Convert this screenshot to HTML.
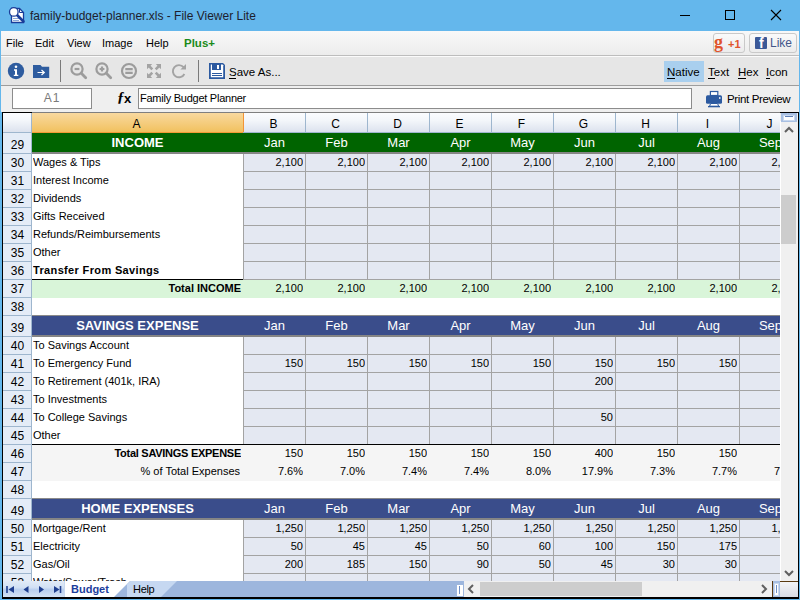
<!DOCTYPE html>
<html><head><meta charset="utf-8">
<style>
*{margin:0;padding:0;box-sizing:border-box}
html,body{width:800px;height:600px;overflow:hidden;background:#64b7ec;font-family:"Liberation Sans",sans-serif}
div{position:absolute}
.t{white-space:nowrap;color:#000;line-height:15px}
#grid div{overflow:hidden;white-space:nowrap}
.lab{font-size:11px;color:#000;line-height:17px;display:block}
.b{font-weight:bold}
.num{font-size:11px;color:#000;line-height:17px;display:block}
.hdr{font-size:13px;font-weight:bold;color:#fff;line-height:19px;display:block}
.mon{font-size:13px;color:#fff;line-height:20px;display:block}
.rh{font-size:12px;color:#000;line-height:17px;display:block;padding-left:1px;padding-top:1px}
.ch{font-size:12px;color:#000;line-height:19px;padding-top:2px;padding-right:2px;display:block;text-align:center}
</style></head><body>
<!-- title bar -->
<div style="left:0;top:0;width:800px;height:31px;background:#64b7ec"></div>
<svg style="position:absolute;left:5px;top:4px" width="24" height="22" viewBox="0 0 24 22">
  <path d="M6.5 4.5H14.5L18.5 8.5V18.5H6.5z" fill="#fff" stroke="#1a3d9a" stroke-width="1.3"/>
  <path d="M14.5 4.5V8.5H18.5" fill="none" stroke="#1a3d9a" stroke-width="1"/>
  <path d="M8 14.5h6M8 16.5h6" stroke="#7f9fd6" stroke-width="0.9"/>
  <path d="M11.5 10.5L18.5 17.5" stroke="#1a3d9a" stroke-width="2.6" stroke-linecap="round"/>
  <circle cx="8.8" cy="7.9" r="4.3" fill="#fff" stroke="#1a3d9a" stroke-width="1.3"/>
</svg>
<div class="t" style="left:30px;top:9px;font-size:12px;color:#1e1e2e;letter-spacing:0px">family-budget-planner.xls - File Viewer Lite</div>
<div style="left:680px;top:15px;width:10px;height:1px;background:#000"></div>
<div style="left:725px;top:10px;width:10px;height:10px;border:1px solid #000"></div>
<svg style="position:absolute;left:770px;top:9px" width="12" height="12" viewBox="0 0 12 12"><path d="M1 1L11 11M11 1L1 11" stroke="#000" stroke-width="1.1"/></svg>
<!-- window borders -->
<div style="left:0;top:31px;width:1px;height:569px;background:#64b7ec"></div>
<div style="left:799px;top:31px;width:1px;height:569px;background:#64b7ec"></div>
<div style="left:0;top:599px;width:800px;height:1px;background:#64b7ec"></div>
<!-- menu bar -->
<div style="left:1px;top:31px;width:798px;height:24px;background:linear-gradient(#f8f8f8,#ececec)"></div>
<div style="left:1px;top:55px;width:798px;height:1px;background:#bdbdbd"></div>
<div class="t" style="left:6px;top:36px;font-size:11px">File</div>
<div class="t" style="left:35px;top:36px;font-size:11px">Edit</div>
<div class="t" style="left:67px;top:36px;font-size:11px">View</div>
<div class="t" style="left:102px;top:36px;font-size:11px">Image</div>
<div class="t" style="left:146px;top:36px;font-size:11px">Help</div>
<div class="t" style="left:184px;top:36px;font-size:11.5px;font-weight:bold;color:#1a8a1a">Plus+</div>
<!-- social buttons -->
<div style="left:713px;top:33px;width:32px;height:20px;border:1px solid #c9c9c9;border-radius:3px;background:linear-gradient(#fafafa,#ececec)"></div>
<div class="t" style="left:714px;top:35px;font-size:18px;font-weight:bold;font-family:'Liberation Serif',serif;color:#e0542c">g</div>
<div class="t" style="left:728px;top:37px;font-size:11px;font-weight:bold;color:#e0542c">+1</div>
<div style="left:749px;top:33px;width:48px;height:20px;border:1px solid #c9c9c9;border-radius:3px;background:linear-gradient(#fafafa,#ececec)"></div>
<div style="left:755px;top:37px;width:12px;height:12px;background:#3b5998;border-radius:1px;overflow:hidden"><div class="t" style="left:4px;top:-1px;font-size:14px;font-weight:bold;color:#fff">f</div></div>
<div class="t" style="left:770px;top:36px;font-size:12px;color:#44578a">Like</div>
<!-- toolbar -->
<div style="left:1px;top:56px;width:798px;height:29px;background:#e6e6e6;border-top:1px solid #fbfbfb"></div>
<div style="left:1px;top:85px;width:798px;height:1px;background:#9d9d9d"></div>
<svg style="position:absolute;left:7px;top:62px" width="18" height="18" viewBox="0 0 18 18">
  <circle cx="9" cy="9" r="8.2" fill="#2e5c9f"/>
  <circle cx="9" cy="4.7" r="1.3" fill="#fff"/>
  <path d="M7 7.3h3v5.4h1.3v1.4H6.8v-1.4H8V8.7H7z" fill="#fff"/>
</svg>
<svg style="position:absolute;left:33px;top:64px" width="17" height="15" viewBox="0 0 17 15">
  <path d="M0 1h7.5l1.5 1.8h7.2V14H0z" fill="#2e5c9f"/>
  <path d="M4.5 8.5h6.5M8.5 6l2.8 2.5L8.5 11" stroke="#fff" stroke-width="1.2" fill="none"/>
</svg>
<div style="left:60px;top:60px;width:1px;height:22px;background:#7a7a7a"></div>
<svg style="position:absolute;left:68px;top:60px" width="22" height="22" viewBox="0 0 22 22">
  <circle cx="9" cy="9" r="5.6" fill="none" stroke="#9c9c9c" stroke-width="2.2"/>
  <path d="M6.6 9h4.8" stroke="#9c9c9c" stroke-width="2.2"/>
  <path d="M13.3 13.3l4.4 4.4" stroke="#9c9c9c" stroke-width="2.8" stroke-linecap="round"/>
</svg>
<svg style="position:absolute;left:93px;top:60px" width="22" height="22" viewBox="0 0 22 22">
  <circle cx="9" cy="9" r="5.6" fill="none" stroke="#9c9c9c" stroke-width="2.2"/>
  <path d="M6.6 9h4.8M9 6.6v4.8" stroke="#9c9c9c" stroke-width="2.2"/>
  <path d="M13.3 13.3l4.4 4.4" stroke="#9c9c9c" stroke-width="2.8" stroke-linecap="round"/>
</svg>
<svg style="position:absolute;left:119px;top:61px" width="20" height="20" viewBox="0 0 20 20">
  <circle cx="10" cy="10" r="7" fill="none" stroke="#9c9c9c" stroke-width="2.2"/>
  <path d="M6.3 8.2h7.4M6.3 11.8h7.4" stroke="#9c9c9c" stroke-width="2.2"/>
</svg>
<svg style="position:absolute;left:146px;top:63px" width="16" height="16" viewBox="0 0 16 16">
  <path d="M2 2l4.3 4.3M14 2l-4.3 4.3M2 14l4.3-4.3M14 14l-4.3-4.3" stroke="#a3a3a3" stroke-width="2.6"/>
  <path d="M1 1h5.2L1 6.2zM15 1h-5.2l5.2 5.2zM1 15h5.2l-5.2-5.2zM15 15h-5.2l5.2-5.2z" fill="#a3a3a3"/>
</svg>
<svg style="position:absolute;left:171px;top:63px" width="16" height="16" viewBox="0 0 16 16">
  <path d="M12.6 4.2A6.1 6.1 0 1 0 13.4 11" fill="none" stroke="#a3a3a3" stroke-width="1.9"/>
  <path d="M15 1v5.6H9.4z" fill="#a3a3a3"/>
</svg>
<div style="left:198px;top:60px;width:1px;height:22px;background:#7a7a7a"></div>
<svg style="position:absolute;left:209px;top:63px" width="16" height="16" viewBox="0 0 16 16">
  <path d="M0 0H14L16 2V16H0z" fill="#2c5aa0"/>
  <path d="M1.8 1.6H13.6L14.2 2.2V14.2H1.8z" fill="#fff"/>
  <rect x="3" y="0" width="9" height="7" fill="#2c5aa0"/>
  <rect x="8" y="2" width="2" height="4" fill="#fff"/>
  <path d="M3 10.5h10M3 12.5h10" stroke="#2c5aa0" stroke-width="1.1"/>
</svg>
<div class="t" style="left:229px;top:65px;font-size:11.5px">Save As...</div>
<div style="left:229px;top:78px;width:7px;height:1px;background:#000"></div>
<div style="left:664px;top:61px;width:40px;height:21px;background:#a9cfee"></div>
<div class="t" style="left:667px;top:65px;font-size:11.5px">Native</div>
<div class="t" style="left:708px;top:65px;font-size:11.5px">Text</div>
<div class="t" style="left:738px;top:65px;font-size:11.5px">Hex</div>
<div class="t" style="left:766px;top:65px;font-size:11.5px">Icon</div>
<div style="left:667px;top:78px;width:8px;height:1px;background:#000"></div>
<div style="left:708px;top:78px;width:7px;height:1px;background:#000"></div>
<div style="left:738px;top:78px;width:8px;height:1px;background:#000"></div>
<div style="left:766px;top:78px;width:4px;height:1px;background:#000"></div>
<!-- formula bar -->
<div style="left:1px;top:86px;width:798px;height:26px;background:#efefef"></div>
<div style="left:12px;top:88px;width:80px;height:21px;border:1px solid #8c8c8c;background:#fff"></div>
<div class="t" style="left:12px;top:91px;width:80px;text-align:center;font-size:12px;color:#7a7a7a;letter-spacing:1px">A1</div>
<div class="t" style="left:117px;top:90px;font-size:15px;font-weight:bold;font-style:italic;font-family:'Liberation Serif',serif">&#402;</div>
<div class="t" style="left:124px;top:91px;font-size:13px;font-weight:bold">x</div>
<div style="left:138px;top:88px;width:554px;height:21px;border:1px solid #8c8c8c;background:#fff"></div>
<div class="t" style="left:140px;top:91px;font-size:11px;letter-spacing:-0.25px">Family Budget Planner</div>
<svg style="position:absolute;left:705px;top:90px" width="18" height="18" viewBox="0 0 18 18">
  <rect x="5.4" y="1.5" width="7.4" height="4" fill="#fff" stroke="#2c5aa0" stroke-width="1.2"/>
  <rect x="1" y="5.2" width="16" height="8.6" rx="1.5" fill="#2c5aa0"/>
  <rect x="14.2" y="7" width="1.2" height="2" fill="#fff"/>
  <path d="M5.6 13.5L4.6 16.2H13.6L12.6 13.5z" fill="#fff" stroke="#2c5aa0" stroke-width="1"/>
  <rect x="3" y="16" width="12" height="1.3" fill="#2c5aa0"/>
</svg>
<div class="t" style="left:727px;top:92px;font-size:11.5px;letter-spacing:-0.35px">Print Preview</div>

<div id="grid" style="left:0;top:0;width:800px;height:600px;overflow:hidden">
<div style="left:0;top:0;width:780px;height:581px;overflow:hidden">
<div style="left:2px;top:113px;width:778px;height:468px;background:#fff"></div>
<div style="left:32px;top:133px;width:770px;height:19px;background:#006400"></div>
<div style="left:32px;top:152px;width:770px;height:2px;background:#858585"></div>
<div style="left:32px;top:133px;width:211px;height:19px;text-align:center"><span class="hdr">INCOME</span></div>
<div style="left:244px;top:133px;width:61px;height:19px;text-align:center"><span class="mon">Jan</span></div>
<div style="left:306px;top:133px;width:61px;height:19px;text-align:center"><span class="mon">Feb</span></div>
<div style="left:368px;top:133px;width:61px;height:19px;text-align:center"><span class="mon">Mar</span></div>
<div style="left:430px;top:133px;width:61px;height:19px;text-align:center"><span class="mon">Apr</span></div>
<div style="left:492px;top:133px;width:61px;height:19px;text-align:center"><span class="mon">May</span></div>
<div style="left:554px;top:133px;width:61px;height:19px;text-align:center"><span class="mon">Jun</span></div>
<div style="left:616px;top:133px;width:61px;height:19px;text-align:center"><span class="mon">Jul</span></div>
<div style="left:678px;top:133px;width:61px;height:19px;text-align:center"><span class="mon">Aug</span></div>
<div style="left:740px;top:133px;width:61px;height:19px;text-align:center"><span class="mon">Sep</span></div>
<div style="left:244px;top:154px;width:558px;height:18px;background:#e4e8f2"></div>
<div style="left:244px;top:171px;width:558px;height:1px;background:#a3a3a3"></div>
<div style="left:33px;top:154px;width:210px;height:17px;padding-left:0px"><span class="lab">Wages &amp; Tips</span></div>
<div style="left:244px;top:154px;width:59px;height:17px;text-align:right"><span class="num">2,100</span></div>
<div style="left:306px;top:154px;width:59px;height:17px;text-align:right"><span class="num">2,100</span></div>
<div style="left:368px;top:154px;width:59px;height:17px;text-align:right"><span class="num">2,100</span></div>
<div style="left:430px;top:154px;width:59px;height:17px;text-align:right"><span class="num">2,100</span></div>
<div style="left:492px;top:154px;width:59px;height:17px;text-align:right"><span class="num">2,100</span></div>
<div style="left:554px;top:154px;width:59px;height:17px;text-align:right"><span class="num">2,100</span></div>
<div style="left:616px;top:154px;width:59px;height:17px;text-align:right"><span class="num">2,100</span></div>
<div style="left:678px;top:154px;width:59px;height:17px;text-align:right"><span class="num">2,100</span></div>
<div style="left:740px;top:154px;width:59px;height:17px;text-align:right"><span class="num">2,100</span></div>
<div style="left:244px;top:172px;width:558px;height:18px;background:#e4e8f2"></div>
<div style="left:244px;top:189px;width:558px;height:1px;background:#a3a3a3"></div>
<div style="left:33px;top:172px;width:210px;height:17px;padding-left:0px"><span class="lab">Interest Income</span></div>
<div style="left:244px;top:190px;width:558px;height:18px;background:#e4e8f2"></div>
<div style="left:244px;top:207px;width:558px;height:1px;background:#a3a3a3"></div>
<div style="left:33px;top:190px;width:210px;height:17px;padding-left:0px"><span class="lab">Dividends</span></div>
<div style="left:244px;top:208px;width:558px;height:18px;background:#e4e8f2"></div>
<div style="left:244px;top:225px;width:558px;height:1px;background:#a3a3a3"></div>
<div style="left:33px;top:208px;width:210px;height:17px;padding-left:0px"><span class="lab">Gifts Received</span></div>
<div style="left:244px;top:226px;width:558px;height:18px;background:#e4e8f2"></div>
<div style="left:244px;top:243px;width:558px;height:1px;background:#a3a3a3"></div>
<div style="left:33px;top:226px;width:210px;height:17px;padding-left:0px"><span class="lab">Refunds/Reimbursements</span></div>
<div style="left:244px;top:244px;width:558px;height:18px;background:#e4e8f2"></div>
<div style="left:244px;top:261px;width:558px;height:1px;background:#a3a3a3"></div>
<div style="left:33px;top:244px;width:210px;height:17px;padding-left:0px"><span class="lab">Other</span></div>
<div style="left:244px;top:262px;width:558px;height:18px;background:#e4e8f2"></div>
<div style="left:244px;top:279px;width:558px;height:1px;background:#a3a3a3"></div>
<div style="left:33px;top:262px;width:210px;height:17px;padding-left:0px"><span class="lab"><b style="letter-spacing:0.35px">Transfer From Savings</b></span></div>
<div style="left:243px;top:154px;width:1px;height:126px;background:#a3a3a3"></div>
<div style="left:305px;top:154px;width:1px;height:126px;background:#a3a3a3"></div>
<div style="left:367px;top:154px;width:1px;height:126px;background:#a3a3a3"></div>
<div style="left:429px;top:154px;width:1px;height:126px;background:#a3a3a3"></div>
<div style="left:491px;top:154px;width:1px;height:126px;background:#a3a3a3"></div>
<div style="left:553px;top:154px;width:1px;height:126px;background:#a3a3a3"></div>
<div style="left:615px;top:154px;width:1px;height:126px;background:#a3a3a3"></div>
<div style="left:677px;top:154px;width:1px;height:126px;background:#a3a3a3"></div>
<div style="left:739px;top:154px;width:1px;height:126px;background:#a3a3a3"></div>
<div style="left:32px;top:279px;width:211px;height:1px;background:#000"></div>
<div style="left:32px;top:280px;width:770px;height:18px;background:#d9f5d9"></div>
<div style="left:32px;top:280px;width:209px;height:17px;text-align:right"><span class="lab b">Total INCOME</span></div>
<div style="left:244px;top:280px;width:59px;height:17px;text-align:right"><span class="num">2,100</span></div>
<div style="left:306px;top:280px;width:59px;height:17px;text-align:right"><span class="num">2,100</span></div>
<div style="left:368px;top:280px;width:59px;height:17px;text-align:right"><span class="num">2,100</span></div>
<div style="left:430px;top:280px;width:59px;height:17px;text-align:right"><span class="num">2,100</span></div>
<div style="left:492px;top:280px;width:59px;height:17px;text-align:right"><span class="num">2,100</span></div>
<div style="left:554px;top:280px;width:59px;height:17px;text-align:right"><span class="num">2,100</span></div>
<div style="left:616px;top:280px;width:59px;height:17px;text-align:right"><span class="num">2,100</span></div>
<div style="left:678px;top:280px;width:59px;height:17px;text-align:right"><span class="num">2,100</span></div>
<div style="left:740px;top:280px;width:59px;height:17px;text-align:right"><span class="num">2,100</span></div>
<div style="left:32px;top:316px;width:770px;height:19px;background:#3a4d8b"></div>
<div style="left:32px;top:335px;width:770px;height:2px;background:#858585"></div>
<div style="left:32px;top:315px;width:770px;height:1px;background:#8a8a8a"></div>
<div style="left:32px;top:316px;width:211px;height:19px;text-align:center"><span class="hdr">SAVINGS EXPENSE</span></div>
<div style="left:244px;top:316px;width:61px;height:19px;text-align:center"><span class="mon">Jan</span></div>
<div style="left:306px;top:316px;width:61px;height:19px;text-align:center"><span class="mon">Feb</span></div>
<div style="left:368px;top:316px;width:61px;height:19px;text-align:center"><span class="mon">Mar</span></div>
<div style="left:430px;top:316px;width:61px;height:19px;text-align:center"><span class="mon">Apr</span></div>
<div style="left:492px;top:316px;width:61px;height:19px;text-align:center"><span class="mon">May</span></div>
<div style="left:554px;top:316px;width:61px;height:19px;text-align:center"><span class="mon">Jun</span></div>
<div style="left:616px;top:316px;width:61px;height:19px;text-align:center"><span class="mon">Jul</span></div>
<div style="left:678px;top:316px;width:61px;height:19px;text-align:center"><span class="mon">Aug</span></div>
<div style="left:740px;top:316px;width:61px;height:19px;text-align:center"><span class="mon">Sep</span></div>
<div style="left:244px;top:337px;width:558px;height:18px;background:#e4e8f2"></div>
<div style="left:244px;top:354px;width:558px;height:1px;background:#a3a3a3"></div>
<div style="left:33px;top:337px;width:210px;height:17px;padding-left:0px"><span class="lab">To Savings Account</span></div>
<div style="left:244px;top:355px;width:558px;height:18px;background:#e4e8f2"></div>
<div style="left:244px;top:372px;width:558px;height:1px;background:#a3a3a3"></div>
<div style="left:33px;top:355px;width:210px;height:17px;padding-left:0px"><span class="lab">To Emergency Fund</span></div>
<div style="left:244px;top:355px;width:59px;height:17px;text-align:right"><span class="num">150</span></div>
<div style="left:306px;top:355px;width:59px;height:17px;text-align:right"><span class="num">150</span></div>
<div style="left:368px;top:355px;width:59px;height:17px;text-align:right"><span class="num">150</span></div>
<div style="left:430px;top:355px;width:59px;height:17px;text-align:right"><span class="num">150</span></div>
<div style="left:492px;top:355px;width:59px;height:17px;text-align:right"><span class="num">150</span></div>
<div style="left:554px;top:355px;width:59px;height:17px;text-align:right"><span class="num">150</span></div>
<div style="left:616px;top:355px;width:59px;height:17px;text-align:right"><span class="num">150</span></div>
<div style="left:678px;top:355px;width:59px;height:17px;text-align:right"><span class="num">150</span></div>
<div style="left:740px;top:355px;width:59px;height:17px;text-align:right"><span class="num">150</span></div>
<div style="left:244px;top:373px;width:558px;height:18px;background:#e4e8f2"></div>
<div style="left:244px;top:390px;width:558px;height:1px;background:#a3a3a3"></div>
<div style="left:33px;top:373px;width:210px;height:17px;padding-left:0px"><span class="lab">To Retirement (401k, IRA)</span></div>
<div style="left:554px;top:373px;width:59px;height:17px;text-align:right"><span class="num">200</span></div>
<div style="left:244px;top:391px;width:558px;height:18px;background:#e4e8f2"></div>
<div style="left:244px;top:408px;width:558px;height:1px;background:#a3a3a3"></div>
<div style="left:33px;top:391px;width:210px;height:17px;padding-left:0px"><span class="lab">To Investments</span></div>
<div style="left:244px;top:409px;width:558px;height:18px;background:#e4e8f2"></div>
<div style="left:244px;top:426px;width:558px;height:1px;background:#a3a3a3"></div>
<div style="left:33px;top:409px;width:210px;height:17px;padding-left:0px"><span class="lab">To College Savings</span></div>
<div style="left:554px;top:409px;width:59px;height:17px;text-align:right"><span class="num">50</span></div>
<div style="left:244px;top:427px;width:558px;height:18px;background:#e4e8f2"></div>
<div style="left:244px;top:444px;width:558px;height:1px;background:#a3a3a3"></div>
<div style="left:33px;top:427px;width:210px;height:17px;padding-left:0px"><span class="lab">Other</span></div>
<div style="left:243px;top:337px;width:1px;height:108px;background:#a3a3a3"></div>
<div style="left:305px;top:337px;width:1px;height:108px;background:#a3a3a3"></div>
<div style="left:367px;top:337px;width:1px;height:108px;background:#a3a3a3"></div>
<div style="left:429px;top:337px;width:1px;height:108px;background:#a3a3a3"></div>
<div style="left:491px;top:337px;width:1px;height:108px;background:#a3a3a3"></div>
<div style="left:553px;top:337px;width:1px;height:108px;background:#a3a3a3"></div>
<div style="left:615px;top:337px;width:1px;height:108px;background:#a3a3a3"></div>
<div style="left:677px;top:337px;width:1px;height:108px;background:#a3a3a3"></div>
<div style="left:739px;top:337px;width:1px;height:108px;background:#a3a3a3"></div>
<div style="left:32px;top:444px;width:770px;height:1px;background:#000"></div>
<div style="left:32px;top:445px;width:770px;height:36px;background:#f5f5f5"></div>
<div style="left:32px;top:445px;width:209px;height:17px;text-align:right"><span class="lab b" style="letter-spacing:-0.27px">Total SAVINGS EXPENSE</span></div>
<div style="left:32px;top:463px;width:208px;height:17px;text-align:right"><span class="lab">% of Total Expenses</span></div>
<div style="left:244px;top:445px;width:59px;height:17px;text-align:right"><span class="num">150</span></div>
<div style="left:306px;top:445px;width:59px;height:17px;text-align:right"><span class="num">150</span></div>
<div style="left:368px;top:445px;width:59px;height:17px;text-align:right"><span class="num">150</span></div>
<div style="left:430px;top:445px;width:59px;height:17px;text-align:right"><span class="num">150</span></div>
<div style="left:492px;top:445px;width:59px;height:17px;text-align:right"><span class="num">150</span></div>
<div style="left:554px;top:445px;width:59px;height:17px;text-align:right"><span class="num">400</span></div>
<div style="left:616px;top:445px;width:59px;height:17px;text-align:right"><span class="num">150</span></div>
<div style="left:678px;top:445px;width:59px;height:17px;text-align:right"><span class="num">150</span></div>
<div style="left:740px;top:445px;width:59px;height:17px;text-align:right"><span class="num">150</span></div>
<div style="left:244px;top:463px;width:59px;height:17px;text-align:right"><span class="num">7.6%</span></div>
<div style="left:306px;top:463px;width:59px;height:17px;text-align:right"><span class="num">7.0%</span></div>
<div style="left:368px;top:463px;width:59px;height:17px;text-align:right"><span class="num">7.4%</span></div>
<div style="left:430px;top:463px;width:59px;height:17px;text-align:right"><span class="num">7.4%</span></div>
<div style="left:492px;top:463px;width:59px;height:17px;text-align:right"><span class="num">8.0%</span></div>
<div style="left:554px;top:463px;width:59px;height:17px;text-align:right"><span class="num">17.9%</span></div>
<div style="left:616px;top:463px;width:59px;height:17px;text-align:right"><span class="num">7.3%</span></div>
<div style="left:678px;top:463px;width:59px;height:17px;text-align:right"><span class="num">7.7%</span></div>
<div style="left:740px;top:463px;width:59px;height:17px;text-align:right"><span class="num">7.6%</span></div>
<div style="left:32px;top:499px;width:770px;height:19px;background:#3a4d8b"></div>
<div style="left:32px;top:518px;width:770px;height:2px;background:#858585"></div>
<div style="left:32px;top:498px;width:770px;height:1px;background:#8a8a8a"></div>
<div style="left:32px;top:499px;width:211px;height:19px;text-align:center"><span class="hdr">HOME EXPENSES</span></div>
<div style="left:244px;top:499px;width:61px;height:19px;text-align:center"><span class="mon">Jan</span></div>
<div style="left:306px;top:499px;width:61px;height:19px;text-align:center"><span class="mon">Feb</span></div>
<div style="left:368px;top:499px;width:61px;height:19px;text-align:center"><span class="mon">Mar</span></div>
<div style="left:430px;top:499px;width:61px;height:19px;text-align:center"><span class="mon">Apr</span></div>
<div style="left:492px;top:499px;width:61px;height:19px;text-align:center"><span class="mon">May</span></div>
<div style="left:554px;top:499px;width:61px;height:19px;text-align:center"><span class="mon">Jun</span></div>
<div style="left:616px;top:499px;width:61px;height:19px;text-align:center"><span class="mon">Jul</span></div>
<div style="left:678px;top:499px;width:61px;height:19px;text-align:center"><span class="mon">Aug</span></div>
<div style="left:740px;top:499px;width:61px;height:19px;text-align:center"><span class="mon">Sep</span></div>
<div style="left:244px;top:520px;width:558px;height:18px;background:#e4e8f2"></div>
<div style="left:244px;top:537px;width:558px;height:1px;background:#a3a3a3"></div>
<div style="left:33px;top:520px;width:210px;height:17px;padding-left:0px"><span class="lab">Mortgage/Rent</span></div>
<div style="left:244px;top:520px;width:59px;height:17px;text-align:right"><span class="num">1,250</span></div>
<div style="left:306px;top:520px;width:59px;height:17px;text-align:right"><span class="num">1,250</span></div>
<div style="left:368px;top:520px;width:59px;height:17px;text-align:right"><span class="num">1,250</span></div>
<div style="left:430px;top:520px;width:59px;height:17px;text-align:right"><span class="num">1,250</span></div>
<div style="left:492px;top:520px;width:59px;height:17px;text-align:right"><span class="num">1,250</span></div>
<div style="left:554px;top:520px;width:59px;height:17px;text-align:right"><span class="num">1,250</span></div>
<div style="left:616px;top:520px;width:59px;height:17px;text-align:right"><span class="num">1,250</span></div>
<div style="left:678px;top:520px;width:59px;height:17px;text-align:right"><span class="num">1,250</span></div>
<div style="left:740px;top:520px;width:59px;height:17px;text-align:right"><span class="num">1,250</span></div>
<div style="left:244px;top:538px;width:558px;height:18px;background:#e4e8f2"></div>
<div style="left:244px;top:555px;width:558px;height:1px;background:#a3a3a3"></div>
<div style="left:33px;top:538px;width:210px;height:17px;padding-left:0px"><span class="lab">Electricity</span></div>
<div style="left:244px;top:538px;width:59px;height:17px;text-align:right"><span class="num">50</span></div>
<div style="left:306px;top:538px;width:59px;height:17px;text-align:right"><span class="num">45</span></div>
<div style="left:368px;top:538px;width:59px;height:17px;text-align:right"><span class="num">45</span></div>
<div style="left:430px;top:538px;width:59px;height:17px;text-align:right"><span class="num">50</span></div>
<div style="left:492px;top:538px;width:59px;height:17px;text-align:right"><span class="num">60</span></div>
<div style="left:554px;top:538px;width:59px;height:17px;text-align:right"><span class="num">100</span></div>
<div style="left:616px;top:538px;width:59px;height:17px;text-align:right"><span class="num">150</span></div>
<div style="left:678px;top:538px;width:59px;height:17px;text-align:right"><span class="num">175</span></div>
<div style="left:740px;top:538px;width:59px;height:17px;text-align:right"><span class="num">200</span></div>
<div style="left:244px;top:556px;width:558px;height:18px;background:#e4e8f2"></div>
<div style="left:244px;top:573px;width:558px;height:1px;background:#a3a3a3"></div>
<div style="left:33px;top:556px;width:210px;height:17px;padding-left:0px"><span class="lab">Gas/Oil</span></div>
<div style="left:244px;top:556px;width:59px;height:17px;text-align:right"><span class="num">200</span></div>
<div style="left:306px;top:556px;width:59px;height:17px;text-align:right"><span class="num">185</span></div>
<div style="left:368px;top:556px;width:59px;height:17px;text-align:right"><span class="num">150</span></div>
<div style="left:430px;top:556px;width:59px;height:17px;text-align:right"><span class="num">90</span></div>
<div style="left:492px;top:556px;width:59px;height:17px;text-align:right"><span class="num">50</span></div>
<div style="left:554px;top:556px;width:59px;height:17px;text-align:right"><span class="num">45</span></div>
<div style="left:616px;top:556px;width:59px;height:17px;text-align:right"><span class="num">30</span></div>
<div style="left:678px;top:556px;width:59px;height:17px;text-align:right"><span class="num">30</span></div>
<div style="left:740px;top:556px;width:59px;height:17px;text-align:right"><span class="num">30</span></div>
<div style="left:244px;top:574px;width:558px;height:18px;background:#e4e8f2"></div>
<div style="left:244px;top:591px;width:558px;height:1px;background:#a3a3a3"></div>
<div style="left:33px;top:574px;width:210px;height:17px;padding-left:0px"><span class="lab">Water/Sewer/Trash</span></div>
<div style="left:244px;top:592px;width:558px;height:18px;background:#e4e8f2"></div>
<div style="left:244px;top:609px;width:558px;height:1px;background:#a3a3a3"></div>
<div style="left:243px;top:520px;width:1px;height:90px;background:#a3a3a3"></div>
<div style="left:305px;top:520px;width:1px;height:90px;background:#a3a3a3"></div>
<div style="left:367px;top:520px;width:1px;height:90px;background:#a3a3a3"></div>
<div style="left:429px;top:520px;width:1px;height:90px;background:#a3a3a3"></div>
<div style="left:491px;top:520px;width:1px;height:90px;background:#a3a3a3"></div>
<div style="left:553px;top:520px;width:1px;height:90px;background:#a3a3a3"></div>
<div style="left:615px;top:520px;width:1px;height:90px;background:#a3a3a3"></div>
<div style="left:677px;top:520px;width:1px;height:90px;background:#a3a3a3"></div>
<div style="left:739px;top:520px;width:1px;height:90px;background:#a3a3a3"></div>
<div style="left:3px;top:136px;width:28px;height:17px;background:#e4ecf7;text-align:center"><span class="rh">29</span></div>
<div style="left:3px;top:133px;width:28px;height:3px;background:#e4ecf7"></div>
<div style="left:2px;top:153px;width:30px;height:1px;background:#9eb6ce"></div>
<div style="left:3px;top:154px;width:28px;height:17px;background:#e4ecf7;text-align:center"><span class="rh">30</span></div>
<div style="left:2px;top:171px;width:30px;height:1px;background:#9eb6ce"></div>
<div style="left:3px;top:172px;width:28px;height:17px;background:#e4ecf7;text-align:center"><span class="rh">31</span></div>
<div style="left:2px;top:189px;width:30px;height:1px;background:#9eb6ce"></div>
<div style="left:3px;top:190px;width:28px;height:17px;background:#e4ecf7;text-align:center"><span class="rh">32</span></div>
<div style="left:2px;top:207px;width:30px;height:1px;background:#9eb6ce"></div>
<div style="left:3px;top:208px;width:28px;height:17px;background:#e4ecf7;text-align:center"><span class="rh">33</span></div>
<div style="left:2px;top:225px;width:30px;height:1px;background:#9eb6ce"></div>
<div style="left:3px;top:226px;width:28px;height:17px;background:#e4ecf7;text-align:center"><span class="rh">34</span></div>
<div style="left:2px;top:243px;width:30px;height:1px;background:#9eb6ce"></div>
<div style="left:3px;top:244px;width:28px;height:17px;background:#e4ecf7;text-align:center"><span class="rh">35</span></div>
<div style="left:2px;top:261px;width:30px;height:1px;background:#9eb6ce"></div>
<div style="left:3px;top:262px;width:28px;height:17px;background:#e4ecf7;text-align:center"><span class="rh">36</span></div>
<div style="left:2px;top:279px;width:30px;height:1px;background:#9eb6ce"></div>
<div style="left:3px;top:280px;width:28px;height:17px;background:#e4ecf7;text-align:center"><span class="rh">37</span></div>
<div style="left:2px;top:297px;width:30px;height:1px;background:#9eb6ce"></div>
<div style="left:3px;top:298px;width:28px;height:17px;background:#e4ecf7;text-align:center"><span class="rh">38</span></div>
<div style="left:2px;top:315px;width:30px;height:1px;background:#9eb6ce"></div>
<div style="left:3px;top:319px;width:28px;height:17px;background:#e4ecf7;text-align:center"><span class="rh">39</span></div>
<div style="left:3px;top:316px;width:28px;height:3px;background:#e4ecf7"></div>
<div style="left:2px;top:336px;width:30px;height:1px;background:#9eb6ce"></div>
<div style="left:3px;top:337px;width:28px;height:17px;background:#e4ecf7;text-align:center"><span class="rh">40</span></div>
<div style="left:2px;top:354px;width:30px;height:1px;background:#9eb6ce"></div>
<div style="left:3px;top:355px;width:28px;height:17px;background:#e4ecf7;text-align:center"><span class="rh">41</span></div>
<div style="left:2px;top:372px;width:30px;height:1px;background:#9eb6ce"></div>
<div style="left:3px;top:373px;width:28px;height:17px;background:#e4ecf7;text-align:center"><span class="rh">42</span></div>
<div style="left:2px;top:390px;width:30px;height:1px;background:#9eb6ce"></div>
<div style="left:3px;top:391px;width:28px;height:17px;background:#e4ecf7;text-align:center"><span class="rh">43</span></div>
<div style="left:2px;top:408px;width:30px;height:1px;background:#9eb6ce"></div>
<div style="left:3px;top:409px;width:28px;height:17px;background:#e4ecf7;text-align:center"><span class="rh">44</span></div>
<div style="left:2px;top:426px;width:30px;height:1px;background:#9eb6ce"></div>
<div style="left:3px;top:427px;width:28px;height:17px;background:#e4ecf7;text-align:center"><span class="rh">45</span></div>
<div style="left:2px;top:444px;width:30px;height:1px;background:#9eb6ce"></div>
<div style="left:3px;top:445px;width:28px;height:17px;background:#e4ecf7;text-align:center"><span class="rh">46</span></div>
<div style="left:2px;top:462px;width:30px;height:1px;background:#9eb6ce"></div>
<div style="left:3px;top:463px;width:28px;height:17px;background:#e4ecf7;text-align:center"><span class="rh">47</span></div>
<div style="left:2px;top:480px;width:30px;height:1px;background:#9eb6ce"></div>
<div style="left:3px;top:481px;width:28px;height:17px;background:#e4ecf7;text-align:center"><span class="rh">48</span></div>
<div style="left:2px;top:498px;width:30px;height:1px;background:#9eb6ce"></div>
<div style="left:3px;top:502px;width:28px;height:17px;background:#e4ecf7;text-align:center"><span class="rh">49</span></div>
<div style="left:3px;top:499px;width:28px;height:3px;background:#e4ecf7"></div>
<div style="left:2px;top:519px;width:30px;height:1px;background:#9eb6ce"></div>
<div style="left:3px;top:520px;width:28px;height:17px;background:#e4ecf7;text-align:center"><span class="rh">50</span></div>
<div style="left:2px;top:537px;width:30px;height:1px;background:#9eb6ce"></div>
<div style="left:3px;top:538px;width:28px;height:17px;background:#e4ecf7;text-align:center"><span class="rh">51</span></div>
<div style="left:2px;top:555px;width:30px;height:1px;background:#9eb6ce"></div>
<div style="left:3px;top:556px;width:28px;height:17px;background:#e4ecf7;text-align:center"><span class="rh">52</span></div>
<div style="left:2px;top:573px;width:30px;height:1px;background:#9eb6ce"></div>
<div style="left:3px;top:574px;width:28px;height:17px;background:#e4ecf7;text-align:center"><span class="rh">53</span></div>
<div style="left:2px;top:591px;width:30px;height:1px;background:#9eb6ce"></div>
<div style="left:3px;top:592px;width:28px;height:17px;background:#e4ecf7;text-align:center"><span class="rh">54</span></div>
<div style="left:2px;top:609px;width:30px;height:1px;background:#9eb6ce"></div>
<div style="left:31px;top:133px;width:1px;height:450px;background:#9eb6ce"></div>
<div style="left:2px;top:113px;width:30px;height:19px;background:linear-gradient(#fbfcfe,#f3f6fa 40%,#dce2ee)"></div>
<div style="left:32px;top:113px;width:211px;height:19px;background:linear-gradient(#f9d99f,#f1c15f)"><span class="ch">A</span></div>
<div style="left:243px;top:113px;width:1px;height:19px;background:#f29436"></div>
<div style="left:244px;top:113px;width:61px;height:19px;background:linear-gradient(#fbfcfe,#f3f6fa 40%,#dce2ee)"><span class="ch">B</span></div>
<div style="left:305px;top:113px;width:1px;height:19px;background:#9eb6ce"></div>
<div style="left:306px;top:113px;width:61px;height:19px;background:linear-gradient(#fbfcfe,#f3f6fa 40%,#dce2ee)"><span class="ch">C</span></div>
<div style="left:367px;top:113px;width:1px;height:19px;background:#9eb6ce"></div>
<div style="left:368px;top:113px;width:61px;height:19px;background:linear-gradient(#fbfcfe,#f3f6fa 40%,#dce2ee)"><span class="ch">D</span></div>
<div style="left:429px;top:113px;width:1px;height:19px;background:#9eb6ce"></div>
<div style="left:430px;top:113px;width:61px;height:19px;background:linear-gradient(#fbfcfe,#f3f6fa 40%,#dce2ee)"><span class="ch">E</span></div>
<div style="left:491px;top:113px;width:1px;height:19px;background:#9eb6ce"></div>
<div style="left:492px;top:113px;width:61px;height:19px;background:linear-gradient(#fbfcfe,#f3f6fa 40%,#dce2ee)"><span class="ch">F</span></div>
<div style="left:553px;top:113px;width:1px;height:19px;background:#9eb6ce"></div>
<div style="left:554px;top:113px;width:61px;height:19px;background:linear-gradient(#fbfcfe,#f3f6fa 40%,#dce2ee)"><span class="ch">G</span></div>
<div style="left:615px;top:113px;width:1px;height:19px;background:#9eb6ce"></div>
<div style="left:616px;top:113px;width:61px;height:19px;background:linear-gradient(#fbfcfe,#f3f6fa 40%,#dce2ee)"><span class="ch">H</span></div>
<div style="left:677px;top:113px;width:1px;height:19px;background:#9eb6ce"></div>
<div style="left:678px;top:113px;width:61px;height:19px;background:linear-gradient(#fbfcfe,#f3f6fa 40%,#dce2ee)"><span class="ch">I</span></div>
<div style="left:739px;top:113px;width:1px;height:19px;background:#9eb6ce"></div>
<div style="left:740px;top:113px;width:61px;height:19px;background:linear-gradient(#fbfcfe,#f3f6fa 40%,#dce2ee)"><span class="ch">J</span></div>
<div style="left:801px;top:113px;width:1px;height:19px;background:#9eb6ce"></div>
<div style="left:2px;top:132px;width:778px;height:1px;background:#9eb6ce"></div>
<div style="left:32px;top:132px;width:211px;height:1px;background:#f29b37"></div>
<div style="left:31px;top:113px;width:1px;height:19px;background:#9eb6ce"></div>
<div style="left:2px;top:112px;width:30px;height:1px;background:#000"></div>
<div style="left:32px;top:112px;width:766px;height:1px;background:#7f7f7f"></div>
</div>
</div>
<!-- vertical scrollbar -->
<div style="left:780px;top:112px;width:19px;height:1px;background:#000"></div>
<div style="left:780px;top:113px;width:18px;height:469px;background:#f0f0f0"></div>
<div style="left:780px;top:121px;width:1px;height:460px;background:#fff"></div>
<div style="left:781px;top:113px;width:16px;height:9px;background:#a9c0e2"></div>
<div style="left:783px;top:115px;width:12px;height:6px;background:#fff;border:1px solid #c8d8ef"></div>
<div style="left:785px;top:116px;width:8px;height:1px;background:#5f7fb5"></div>
<svg style="position:absolute;left:784px;top:126px" width="10" height="8" viewBox="0 0 10 8"><path d="M1 6L5 2L9 6" fill="none" stroke="#606060" stroke-width="2"/></svg>
<div style="left:781px;top:195px;width:15px;height:49px;background:#cdcdcd"></div>
<svg style="position:absolute;left:784px;top:569px" width="10" height="8" viewBox="0 0 10 8"><path d="M1 2L5 6L9 2" fill="none" stroke="#606060" stroke-width="2"/></svg>
<div style="left:780px;top:581px;width:18px;height:1px;background:#5a3a10"></div>
<div style="left:798px;top:112px;width:1px;height:487px;background:#000"></div>
<div style="left:2px;top:112px;width:1px;height:487px;background:#000"></div>
<!-- tab bar -->
<div style="left:3px;top:581px;width:461px;height:16px;background:#9db6dd"></div>
<div style="left:3px;top:581px;width:61px;height:16px;background:linear-gradient(#e1ebf7 0%,#d2e1f4 40%,#b9cfee 55%,#d4e2f4 100%)"></div>
<svg style="position:absolute;left:3px;top:581px" width="175" height="16" viewBox="0 0 175 16">
  <path d="M124 16V3.5L127.5 0H174L158 16z" fill="#c6d8f1"/>
  <path d="M61 16V0h66l-16 16z" fill="#fff"/>
  <path d="M61.5 16V0" stroke="#c9d9ef" stroke-width="1"/>
  <path d="M4 5v7" stroke="#1f3f8f" stroke-width="1.6"/><path d="M11 5v7l-5.5-3.5z" fill="#1f3f8f"/>
  <path d="M25.5 5v7l-5-3.5z" fill="#1f3f8f"/>
  <path d="M36 5v7l5-3.5z" fill="#1f3f8f"/>
  <path d="M51 5v7l5.5-3.5z" fill="#1f3f8f"/><path d="M57.5 5v7" stroke="#1f3f8f" stroke-width="1.6"/>
</svg>
<div class="t" style="left:71px;top:583px;font-size:11px;font-weight:bold;color:#1d3e9c;line-height:13px">Budget</div>
<div class="t" style="left:133px;top:583px;font-size:11px;color:#000;line-height:13px;letter-spacing:-0.3px">Help</div>
<div style="left:456px;top:584px;width:8px;height:13px;background:#fff;border:1px solid #9db6dd"></div>
<div style="left:459px;top:586px;width:1px;height:8px;background:#6f8fc5"></div>
<!-- horizontal scrollbar -->
<div style="left:464px;top:581px;width:309px;height:16px;background:#f0f0f0"></div>
<div style="left:480px;top:582px;width:162px;height:14px;background:#cdcdcd"></div>
<svg style="position:absolute;left:467px;top:584px" width="8" height="10" viewBox="0 0 8 10"><path d="M6 1L2 5L6 9" fill="none" stroke="#606060" stroke-width="2"/></svg>
<svg style="position:absolute;left:760px;top:584px" width="8" height="10" viewBox="0 0 8 10"><path d="M2 1L6 5L2 9" fill="none" stroke="#606060" stroke-width="2"/></svg>
<div style="left:772px;top:581px;width:1px;height:17px;background:#5a3a10"></div>
<div style="left:773px;top:581px;width:7px;height:16px;background:#a9c0e2"></div>
<div style="left:774px;top:583px;width:5px;height:13px;background:#fff;border:1px solid #c8d8ef"></div>
<div style="left:776px;top:585px;width:1px;height:8px;background:#6f8fc5"></div>
<div style="left:780px;top:582px;width:18px;height:15px;background:linear-gradient(#f3f4f6,#d9dde5)"></div>
<div style="left:2px;top:597px;width:797px;height:2px;background:#000"></div>

</body></html>
